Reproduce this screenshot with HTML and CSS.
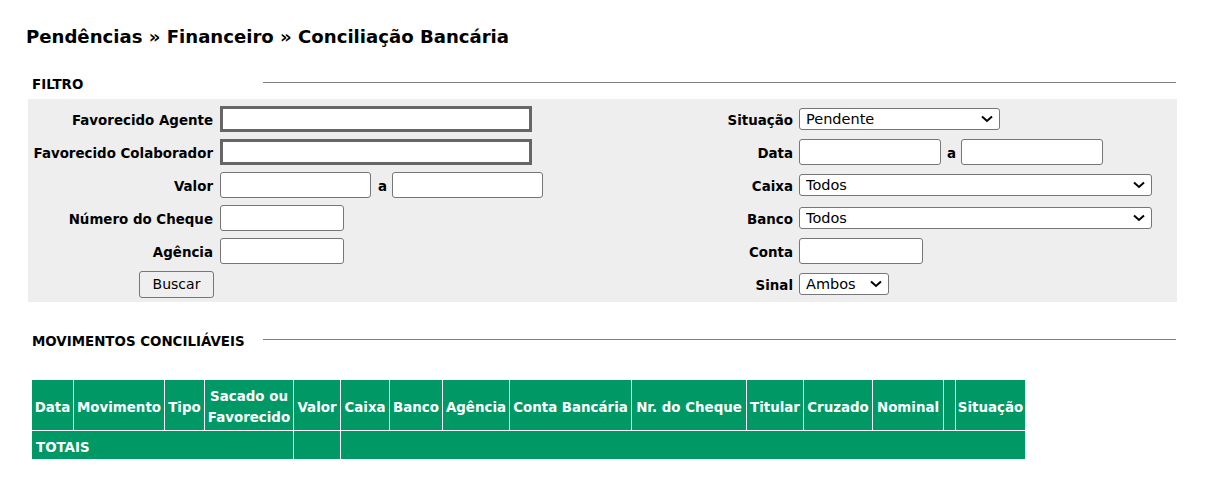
FILE: index.html
```html
<!DOCTYPE html>
<html lang="pt-BR">
<head>
<meta charset="utf-8">
<title>Conciliação Bancária</title>
<link rel="stylesheet" href="styles.css">
</head>
<body>
<div class="page">
  <h1 class="title">Pendências » Financeiro » Conciliação Bancária</h1>

  <div class="section-head">
    <span class="section-label">FILTRO</span>
    <span class="section-line"></span>
  </div>

  <form class="filter">
    <div class="col col-left">
      <label class="lbl">Favorecido Agente</label>
      <div class="ctl"><input class="inp inp-fav" type="text"></div>

      <label class="lbl">Favorecido Colaborador</label>
      <div class="ctl"><input class="inp inp-fav" type="text"></div>

      <label class="lbl">Valor</label>
      <div class="ctl"><input class="inp inp-valor" type="text"><span class="sep">a</span><input class="inp inp-valor" type="text"></div>

      <label class="lbl">Número do Cheque</label>
      <div class="ctl"><input class="inp inp-small" type="text"></div>

      <label class="lbl">Agência</label>
      <div class="ctl"><input class="inp inp-small" type="text"></div>

      <div class="btn-cell"><button class="btn" type="button">Buscar</button></div>
      <div class="ctl"></div>
    </div>

    <div class="col col-right">
      <label class="lbl">Situação</label>
      <div class="ctl">
        <span class="sel-wrap sel-situacao">
          <select class="sel"><option>Pendente</option></select>
          <svg class="chev" width="12" height="8" viewBox="0 0 12 8"><path d="M1 1.5 L6 6 L11 1.5" fill="none" stroke="#000" stroke-width="2"/></svg>
        </span>
      </div>

      <label class="lbl">Data</label>
      <div class="ctl"><input class="inp inp-data" type="text"><span class="sep sep-data">a</span><input class="inp inp-data" type="text"></div>

      <label class="lbl">Caixa</label>
      <div class="ctl">
        <span class="sel-wrap sel-wide">
          <select class="sel"><option>Todos</option></select>
          <svg class="chev" width="12" height="8" viewBox="0 0 12 8"><path d="M1 1.5 L6 6 L11 1.5" fill="none" stroke="#000" stroke-width="2"/></svg>
        </span>
      </div>

      <label class="lbl">Banco</label>
      <div class="ctl">
        <span class="sel-wrap sel-wide">
          <select class="sel"><option>Todos</option></select>
          <svg class="chev" width="12" height="8" viewBox="0 0 12 8"><path d="M1 1.5 L6 6 L11 1.5" fill="none" stroke="#000" stroke-width="2"/></svg>
        </span>
      </div>

      <label class="lbl">Conta</label>
      <div class="ctl"><input class="inp inp-small" type="text"></div>

      <label class="lbl">Sinal</label>
      <div class="ctl">
        <span class="sel-wrap sel-sinal">
          <select class="sel"><option>Ambos</option></select>
          <svg class="chev" width="12" height="8" viewBox="0 0 12 8"><path d="M1 1.5 L6 6 L11 1.5" fill="none" stroke="#000" stroke-width="2"/></svg>
        </span>
      </div>
    </div>
  </form>

  <div class="section-head section-mov">
    <span class="section-label">MOVIMENTOS CONCILIÁVEIS</span>
    <span class="section-line"></span>
  </div>

  <table class="grid">
    <thead>
      <tr>
        <th class="c-data">Data</th>
        <th class="c-mov">Movimento</th>
        <th class="c-tipo">Tipo</th>
        <th class="c-sac">Sacado ou Favorecido</th>
        <th class="c-valor">Valor</th>
        <th class="c-caixa">Caixa</th>
        <th class="c-banco">Banco</th>
        <th class="c-ag">Agência</th>
        <th class="c-conta">Conta Bancária</th>
        <th class="c-cheque">Nr. do Cheque</th>
        <th class="c-tit">Titular</th>
        <th class="c-cruz">Cruzado</th>
        <th class="c-nom">Nominal</th>
        <th class="c-vazio"></th>
        <th class="c-sit">Situação</th>
      </tr>
    </thead>
    <tbody>
      <tr class="totais">
        <td colspan="4">TOTAIS</td>
        <td></td>
        <td colspan="10"></td>
      </tr>
    </tbody>
  </table>
</div>
</body>
</html>
```

FILE: styles.css
```css
* { box-sizing: border-box; }

body {
  margin: 0;
  background: #fff;
  color: #000;
  font-family: "DejaVu Sans", Verdana, sans-serif;
  font-size: 13.4px;
}

.page {
  padding: 26px 36px 0 28px;
}

.title {
  margin: 0 0 0 -2px;
  font-size: 18.1px;
  line-height: 22px;
  font-weight: bold;
  color: #000;
}

.section-head {
  display: flex;
  align-items: center;
  height: 18px;
  margin-top: 27px;
  margin-bottom: 6px;
  padding-left: 4px;
}

.section-label {
  width: 231px;
  flex: none;
  font-weight: bold;
  font-size: 13.4px;
  line-height: 18px;
  padding-top: 2px;
}

.section-line {
  flex: 1;
  height: 1px;
  background: #808080;
  margin-top: -4px;
  margin-right: 1px;
}

.section-mov {
  margin-top: 30px;
  margin-bottom: 29px;
}

.filter {
  display: flex;
  background: #eeeeee;
  padding: 3px 0 2px;
  margin: 0;
}

.col {
  display: grid;
  grid-auto-rows: 33px;
  align-items: center;
}

.col-left {
  width: 574px;
  grid-template-columns: 192px 1fr;
}

.col-right {
  flex: 1;
  grid-template-columns: 197px 1fr;
}

.lbl {
  text-align: right;
  font-weight: bold;
  padding-right: 7px;
  padding-top: 4px;
  white-space: nowrap;
}

.col-right .lbl { padding-right: 6px; }

.ctl {
  display: flex;
  align-items: center;
}

.inp {
  height: 26px;
  border: 1px solid #767676;
  border-radius: 3px;
  background: #fff;
  padding: 1px 2px;
  font-family: inherit;
  font-size: 13px;
  margin: 0;
}

.inp-fav {
  width: 312px;
  height: 26px;
  border: 3px solid #666666;
  border-radius: 0;
}

.inp-valor { width: 151px; }
.inp-small { width: 124px; }
.inp-data { width: 142px; }

.sep {
  font-weight: bold;
  padding: 4px 5px 0 7px;
}

.sep-data {
  padding: 4px 5px 0 6px;
}

.btn-cell {
  display: flex;
  justify-content: flex-end;
  padding-right: 6px;
}

.btn {
  width: 75px;
  height: 27px;
  border: 1px solid #767676;
  border-radius: 3px;
  background: #efefef;
  font-family: inherit;
  font-size: 14px;
  color: #000;
  padding: 0;
  margin-top: 1px;
}

.sel-wrap {
  position: relative;
  display: inline-block;
  height: 22px;
}

.sel {
  -webkit-appearance: none;
  appearance: none;
  width: 100%;
  height: 22px;
  border: 1px solid #767676;
  border-radius: 3px;
  background: #fff;
  font-family: inherit;
  font-size: 14.5px;
  color: #000;
  padding: 0 0 0 6px;
  margin: 0;
  line-height: 20px;
}

.chev {
  position: absolute;
  right: 7px;
  top: 7px;
  pointer-events: none;
}

.sel-situacao { width: 201px; }
.sel-wide { width: 353px; }
.sel-sinal { width: 90px; }

.grid {
  border-collapse: separate;
  border-spacing: 1px;
  table-layout: fixed;
  width: 995px;
  margin-left: 3px;
  color: #fff;
  font-weight: bold;
}

.grid th,
.grid td {
  background: #009966;
  padding: 4px 1px;
  font-size: 13.4px;
}

.grid th {
  height: 50px;
  line-height: 21px;
  text-align: center;
  font-weight: bold;
  padding-top: 6px;
  padding-bottom: 2px;
}

.grid .totais td {
  height: 28px;
  padding: 4px 4px 0;
  text-align: left;
}

.c-data { width: 41px; }
.c-mov { width: 90px; }
.c-tipo { width: 39px; }
.c-sac { width: 88px; }
.c-valor { width: 46px; }
.c-caixa { width: 48px; }
.c-banco { width: 52px; }
.c-ag { width: 66px; }
.c-conta { width: 121px; }
.c-cheque { width: 114px; }
.c-tit { width: 56px; }
.c-cruz { width: 68px; }
.c-nom { width: 70px; }
.c-vazio { width: 11px; }
.c-sit { width: 69px; }
```
